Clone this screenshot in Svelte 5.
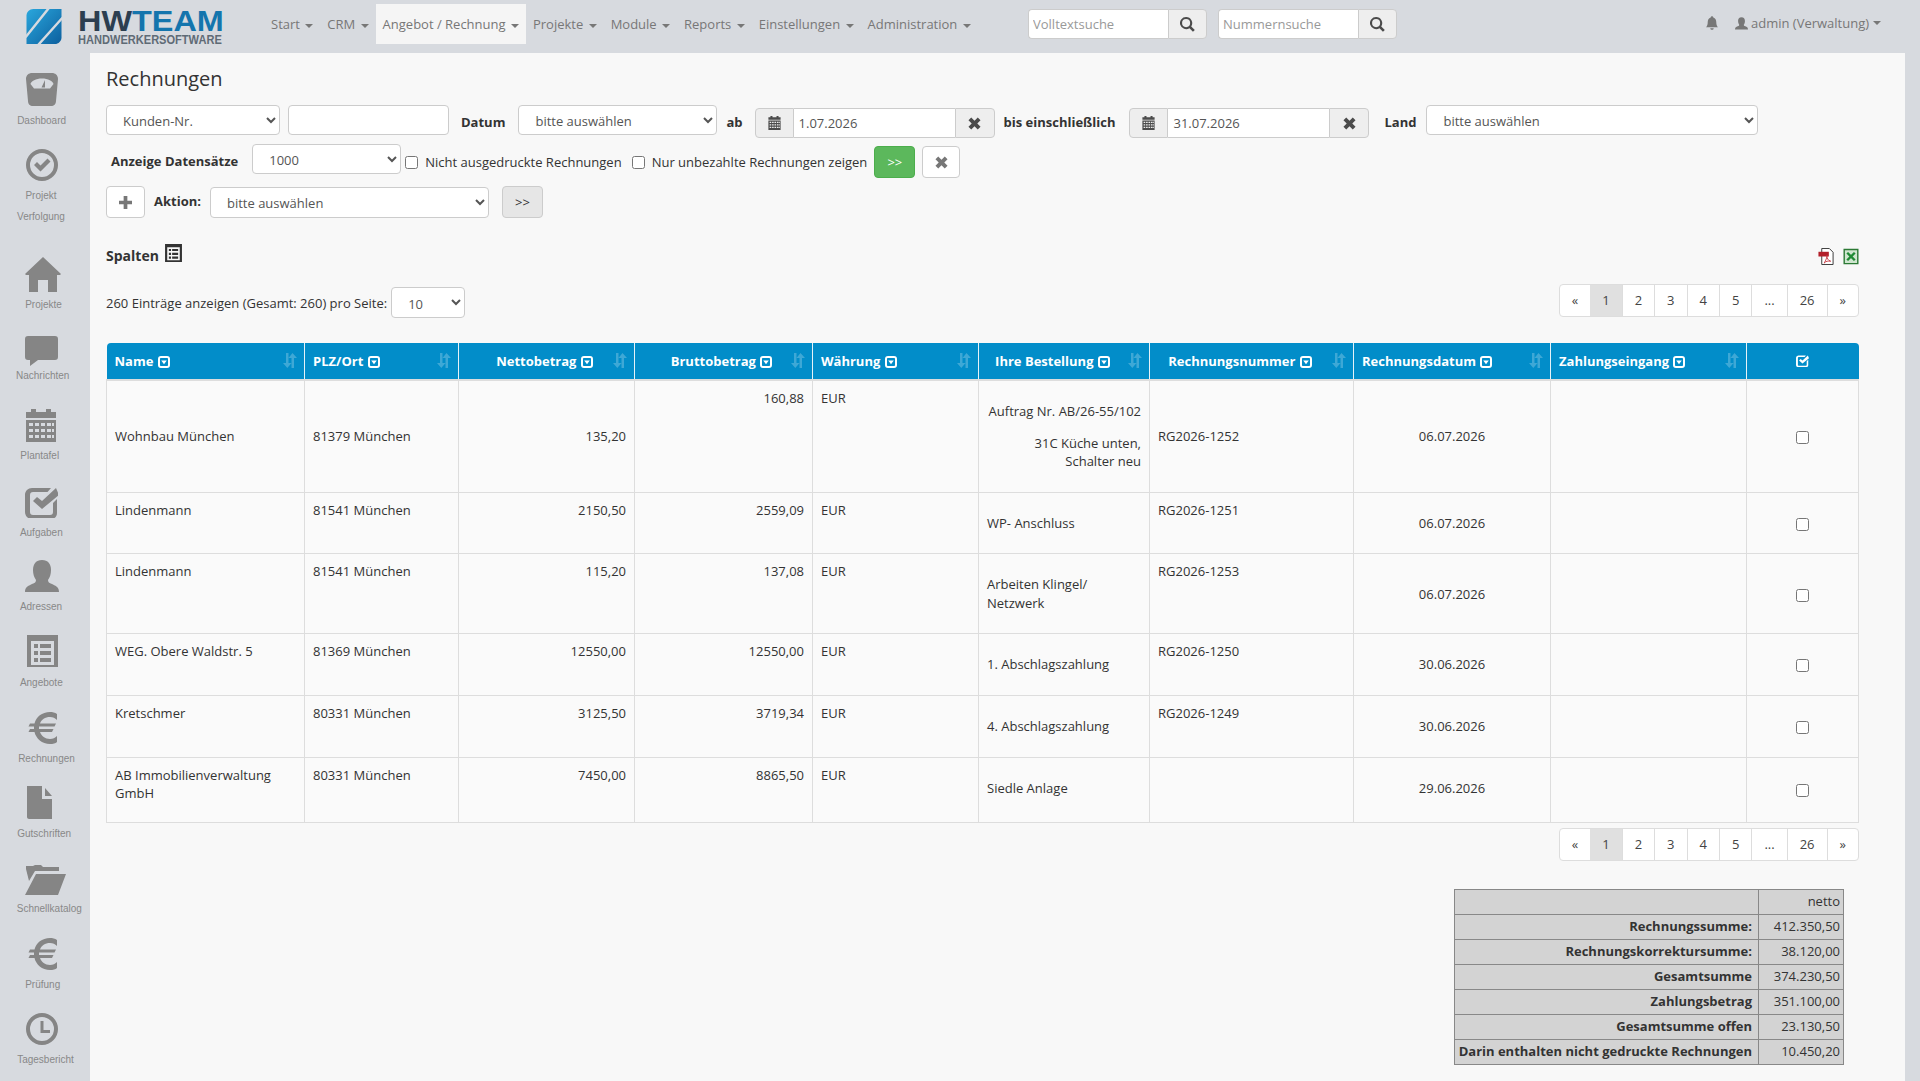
<script>
  const nav = ['Start', 'CRM', 'Angebot / Rechnung', 'Projekte', 'Module', 'Reports', 'Einstellungen', 'Administration'];

  const icons = {
    gauge: 'M6 0h20c3 0 6 2 6 6l-2 22c0 3-2 5-5 5H7c-3 0-5-2-5-5L0 6c0-4 3-6 6-6zM16 5.500C10 5.500 5 8 4.500 11L8 15.500h16L27.500 11C27 8 22 5.500 16 5.500zM19 7l-3.500 7.500h3.500z',
    circleCheck: 'M16 0a16 16 0 1 0 0 32a16 16 0 0 0 0-32zM16 4a12 12 0 1 1 0 24a12 12 0 0 1 0-24zM21.500 9.500l3 3-10 10-6.500-6.500 3-3 3.500 3.500z',
    home: 'M18 0L36 17l-1 1h-3v17H23V23H13v12H4V18H1l-1-1z',
    comment: 'M3 0h27c2 0 3 1 3 3v18c0 2-1 3-3 3H13L5 30V24H3c-2 0-3-1-3-3V3c0-2 1-3 3-3z',
    calendar: 'M1 3h5V0h5v3h10V0h5v3h5v6H1zM1 11h30v23H1zM4 14v3h4v-3zM10 14v3h4v-3zM16 14v3h4v-3zM22 14v3h4v-3zM4 20v3h4v-3zM10 20v3h4v-3zM16 20v3h4v-3zM22 20v3h4v-3zM4 26v3h4v-3zM10 26v3h4v-3zM16 26v3h4v-3zM22 26v3h4v-3zM27 14v3h2v-3zM27 20v3h2v-3zM27 26v3h2v-3z',
    checkSquare: 'M7 1h19l-3.500 4H8c-2 0-3 1-3 3v17c0 2 1 3 3 3h17c2 0 3-1 3-3v-9l4-4v14c0 4-3 6-6 6H7c-4 0-7-3-7-7V8c0-4 3-7 7-7zM31 1l3 7-17 14-9-8 4-4 5 4z',
    user: 'M17 0c6 0 9 4 9 10 0 4-1 7-3 10 0 2 1 3 4 4 4 2 7 3 7 8H0c0-5 3-6 7-8 3-1 4-2 4-4-2-3-3-6-3-10 0-6 3-10 9-10z',
    list: 'M0 0h31v33H0zM4 6v24h23V6zM7 9h4v4H7zM13 9h11v4H13zM7 16h4v4H7zM13 16h11v4H13zM7 23h4v4H7zM13 23h11v4H13z',
    euro: 'M29 3C27 1.500 24.500 1 22 1 14 1 8 6 6.500 12.500H2l-1.500 3H6v2.500H2l-1.500 3h6C8 27.500 14 33 22 33c3 0 5.500-.5 7-2v-6c-2 2-4 3-7 3-5 0-8.500-3-10-7h12l1.500-3H11V15.500h15.500L28 12.500H12C13.500 8.500 17 6 22 6c3 0 5 1 7 3z',
    file: 'M0 0h15v13h10v20H2c-1 0-2-1-2-2zM18 2l7 8h-7z',
    folder: 'M1 4V1h7l2-1h6l2 2h16v4H10L4 16 1 4zM11 9h30L33 30H0z',
    clock: 'M16 0a16 16 0 1 0 0 32a16 16 0 0 0 0-32zM16 4a12 12 0 1 1 0 24a12 12 0 0 1 0-24zM14.500 8h3v9H24v3H14.500z'
  };

  // step = distance to the next icon, drop = icon top to first label line, dx = label off the column middle
  const sidebar = [
    { icon: 'gauge', w: 32, h: 33, x: 26, step: 76, drop: 37, labels: ['Dashboard'], dx: 0.6 },
    { icon: 'circleCheck', w: 32, h: 32, x: 26, step: 108, drop: 36, labels: ['Projekt', 'Verfolgung'], dx: 0 },
    { icon: 'home', w: 36, h: 35, x: 25, step: 79, drop: 37, labels: ['Projekte'], dx: 2.5 },
    { icon: 'comment', w: 33, h: 30, x: 25, step: 73, drop: 29, labels: ['Nachrichten'], dx: 1.7 },
    { icon: 'calendar', w: 31, h: 33, x: 25, step: 78, drop: 36, labels: ['Plantafel'], dx: -1.3 },
    { icon: 'checkSquare', w: 33, h: 31, x: 25, step: 73, drop: 35, labels: ['Aufgaben'], dx: 0.3 },
    { icon: 'user', w: 34, h: 33, x: 25, step: 75, drop: 36, labels: ['Adressen'], dx: 0 },
    { icon: 'list', w: 31, h: 32, x: 27, step: 76, drop: 37, labels: ['Angebote'], dx: 0.3 },
    { icon: 'euro', w: 29, h: 33, x: 28, step: 75, drop: 36.500, labels: ['Rechnungen'], dx: 5.500 },
    { icon: 'file', w: 25, h: 33, x: 27, step: 79, drop: 37, labels: ['Gutschriften'], dx: 3.200 },
    { icon: 'folder', w: 41, h: 30, x: 25, step: 72, drop: 33, labels: ['Schnellkatalog'], dx: 8.300 },
    { icon: 'euro', w: 29, h: 33, x: 28, step: 76, drop: 37, labels: ['Prüfung'], dx: 1.700 },
    { icon: 'clock', w: 32, h: 33, x: 26, step: 60, drop: 36, labels: ['Tagesbericht'], dx: 4.500 }
  ];

  const columns = [
    { label: 'Name', width: 198 },
    { label: 'PLZ/Ort', width: 154 },
    { label: 'Nettobetrag', width: 176, cls: 'center' },
    { label: 'Bruttobetrag', width: 178, cls: 'center' },
    { label: 'Währung', width: 166 },
    { label: 'Ihre Bestellung', width: 171, cls: 'center wide' },
    { label: 'Rechnungsnummer', width: 204, cls: 'center wide' },
    { label: 'Rechnungsdatum', width: 197 },
    { label: 'Zahlungseingang', width: 196 }
  ];

  const rows = [
    { name: 'Wohnbau München', place: '81379 München', net: '135,20', gross: '160,88', order: ['Auftrag Nr. AB/26-55/102', '31C Küche unten, Schalter neu'], right: true, no: 'RG2026-1252', date: '06.07.2026', mid: true },
    { name: 'Lindenmann', place: '81541 München', net: '2150,50', gross: '2559,09', order: ['WP- Anschluss'], no: 'RG2026-1251', date: '06.07.2026' },
    { name: 'Lindenmann', place: '81541 München', net: '115,20', gross: '137,08', order: ['Arbeiten Klingel/ Netzwerk'], no: 'RG2026-1253', date: '06.07.2026' },
    { name: 'WEG. Obere Waldstr. 5', place: '81369 München', net: '12550,00', gross: '12550,00', order: ['1. Abschlagszahlung'], no: 'RG2026-1250', date: '30.06.2026' },
    { name: 'Kretschmer', place: '80331 München', net: '3125,50', gross: '3719,34', order: ['4. Abschlagszahlung'], no: 'RG2026-1249', date: '30.06.2026' },
    { name: 'AB Immobilienverwaltung GmbH', place: '80331 München', net: '7450,00', gross: '8865,50', order: ['Siedle Anlage'], no: '', date: '29.06.2026' }
  ];

  const pages = ['«', '1', '2', '3', '4', '5', '...', '26', '»'];

  const totals = [
    ['', 'netto'],
    ['Rechnungssumme:', '412.350,50'],
    ['Rechnungskorrektursumme:', '38.120,00'],
    ['Gesamtsumme', '374.230,50'],
    ['Zahlungsbetrag', '351.100,00'],
    ['Gesamtsumme offen', '23.130,50'],
    ['Darin enthalten nicht gedruckte Rechnungen', '10.450,20']
  ];
</script>

{#snippet search()}
  <svg class="glyph" viewBox="0 0 16 16" width="15" height="15"><path d="M6.500 0a6.500 6.500 0 1 0 3.600 11.900l3.700 3.900 2-2-3.800-3.800A6.500 6.500 0 0 0 6.500 0zm0 2.200a4.300 4.300 0 1 1 0 8.600 4.300 4.300 0 0 1 0-8.600z" /></svg>
{/snippet}

{#snippet cross()}
  <svg class="glyph" viewBox="0 0 14 14" width="13" height="13"><path d="M3.500.5L7 4l3.500-3.500 3 3L10 7l3.500 3.500-3 3L7 10l-3.500 3.500-3-3L4 7 .5 3.500z" /></svg>
{/snippet}

{#snippet cal()}
  <svg class="glyph" viewBox="0 0 32 34" width="13" height="14"><path fill-rule="evenodd" d={icons.calendar} /></svg>
{/snippet}

{#snippet pagination()}
  <ul class="pagination">
    {#each pages as p}
      <li class:active={p === '1'}>{p}</li>
    {/each}
  </ul>
{/snippet}

<div class="page">
  <header class="topbar">
    <div class="logo">
      <svg viewBox="0 0 36 36" width="36" height="35">
        <defs>
          <linearGradient id="lg" x1="0" y1="0" x2="1" y2="1">
            <stop offset="0" stop-color="#2aa7dd" />
            <stop offset="1" stop-color="#0c5f9e" />
          </linearGradient>
        </defs>
        <path fill="url(#lg)" d="M7 0h29v29c0 4-3 7-7 7H0V7c0-4 3-7 7-7z" />
        <path fill="none" stroke="#d7dadf" stroke-width="2.500" d="M-1 29L23-1M12 37L37 9" />
      </svg>
      <div class="logo-text">
        <div class="brand"><span>HW</span>TEAM</div>
        <div class="sub">HANDWERKERSOFTWARE</div>
      </div>
    </div>

    <nav>
      {#each nav as item}
        <span class="nav-item" class:active={item === 'Angebot / Rechnung'}>{item} <i class="caret"></i></span>
      {/each}
    </nav>

    <div class="search-group first">
      <input type="text" placeholder="Volltextsuche" />
      <span class="search-btn">{@render search()}</span>
    </div>
    <div class="search-group">
      <input type="text" placeholder="Nummernsuche" />
      <span class="search-btn">{@render search()}</span>
    </div>

    <div class="account">
      <svg class="bell" viewBox="0 0 14 16" width="12" height="14"><path d="M7 0c1 0 1.500.7 1.500 1.500C11 2.200 12 4.500 12 7c0 3 .8 4.500 2 6H0c1.200-1.500 2-3 2-6 0-2.500 1-4.800 3.500-5.500C5.500.7 6 0 7 0zM5 14h4c0 1-1 2-2 2s-2-1-2-2z" /></svg>
      <span class="user">
        <svg viewBox="0 0 34 33" width="13" height="13"><path d={icons.user} /></svg>
        admin (Verwaltung) <i class="caret"></i>
      </span>
    </div>
  </header>

  <div class="body">
    <aside>
      {#each sidebar as item}
        <div class="side-item" style="height: {item.step}px">
          <div class="side-icon" style="height: {item.drop}px">
            <svg viewBox="0 0 {item.w} {item.h}" width={item.w} height={item.h} style="margin-left: {item.x}px">
              <path fill-rule="evenodd" d={icons[item.icon]} />
            </svg>
          </div>
          {#each item.labels as label}
            <div class="side-label" style="margin-left: {item.dx}px">{label}</div>
          {/each}
        </div>
      {/each}
    </aside>

    <main>
      <h1>Rechnungen</h1>

      <div class="filter-row one">
        <select class="kunden"><option>Kunden-Nr.</option></select>
        <input class="kunden-input" type="text" />
        <b class="lbl datum">Datum</b>
        <select class="datum-select"><option>bitte auswählen</option></select>
        <b class="lbl ab">ab</b>
        <div class="date-group">
          <span class="addon left">{@render cal()}</span>
          <input type="text" value="1.07.2026" />
          <span class="addon right">{@render cross()}</span>
        </div>
        <b class="lbl bis">bis einschließlich</b>
        <div class="date-group">
          <span class="addon left">{@render cal()}</span>
          <input type="text" value="31.07.2026" />
          <span class="addon right">{@render cross()}</span>
        </div>
        <b class="lbl land">Land</b>
        <select class="land-select"><option>bitte auswählen</option></select>
      </div>

      <div class="filter-row two">
        <b class="lbl anzeige">Anzeige Datensätze</b>
        <select class="count"><option>1000</option></select>
        <label class="check first"><input type="checkbox" /> Nicht ausgedruckte Rechnungen</label>
        <label class="check"><input type="checkbox" /> Nur unbezahlte Rechnungen zeigen</label>
        <button class="btn green">&gt;&gt;</button>
        <button class="btn white">{@render cross()}</button>
      </div>

      <div class="filter-row three">
        <button class="btn white plus">
          <svg class="glyph" viewBox="0 0 14 14" width="13" height="13"><path d="M5 0h4v5h5v4H9v5H5V9H0V5h5z" /></svg>
        </button>
        <b class="lbl aktion">Aktion:</b>
        <select class="aktion-select"><option>bitte auswählen</option></select>
        <button class="btn grey">&gt;&gt;</button>
      </div>

      <div class="spalten-row">
        <b>Spalten</b>
        <svg class="list-icon" viewBox="0 0 31 33" width="17" height="18"><path fill-rule="evenodd" d={icons.list} /></svg>
        <div class="exports">
          <svg viewBox="0 0 16 18" width="16" height="17">
            <path fill="#fff" stroke="#333" d="M3.500.5h8l4 4v13h-12z" />
            <path fill="#b3202a" d="M0 4h11v5H0z" />
            <path fill="none" stroke="#c9434b" d="M6 16c2-3 3-6 3-8 0 3 1 5 4 6-3-.5-5 0-7 2z" />
          </svg>
          <svg viewBox="0 0 16 18" width="16" height="17">
            <path fill="#cfe6cf" stroke="#2c7a35" stroke-width="1.500" d="M.8 1.500h14.400v15H.8z" />
            <path fill="none" stroke="#1f8a34" stroke-width="2.500" d="M4 5l8 8M12 5l-8 8" />
          </svg>
        </div>
      </div>

      <div class="entries-row">
        <span class="entries-text">260 Einträge anzeigen (Gesamt: 260) pro Seite:</span>
        <select class="per-page"><option>10</option></select>
        {@render pagination()}
      </div>

      <table class="list">
        <colgroup>
          {#each columns as col}
            <col style="width: {col.width}px" />
          {/each}
          <col />
        </colgroup>
        <thead>
          <tr>
            {#each columns as col}
              <th class={col.cls}>
                {col.label}
                <svg class="filter" viewBox="0 0 12 12" width="12" height="12">
                  <path fill="#fff" fill-rule="evenodd" d="M3 0h6c2 0 3 1 3 3v6c0 2-1 3-3 3H3c-2 0-3-1-3-3V3c0-2 1-3 3-3zM3 2C2.400 2 2 2.400 2 3v6c0 .6.4 1 1 1h6c.6 0 1-.4 1-1V3c0-.6-.4-1-1-1zM3.200 4.500h5.600L6 8.200z" />
                </svg>
                <svg class="sort" viewBox="0 0 14 15" width="14" height="15">
                  <path d="M3 0h2.500v10H8.500L4.300 15 0 10h3zM9.500 0L14 5h-3v10H8.500V5H5.500z" />
                </svg>
              </th>
            {/each}
            <th class="center check-head">
              <svg viewBox="0 0 34 31" width="13" height="12"><path fill="#fff" fill-rule="evenodd" d={icons.checkSquare} /></svg>
            </th>
          </tr>
        </thead>
        <tbody>
          {#each rows as row}
            <tr>
              <td class:mid={row.mid}>{row.name}</td>
              <td class:mid={row.mid}>{row.place}</td>
              <td class="num" class:mid={row.mid}>{row.net}</td>
              <td class="num">{row.gross}</td>
              <td>EUR</td>
              <td class="order mid" class:num={row.right}>
                {#each row.order as line}
                  <p>{line}</p>
                {/each}
              </td>
              <td class:mid={row.mid}>{row.no}</td>
              <td class="mid center date">{row.date}</td>
              <td></td>
              <td class="mid center"><input type="checkbox" /></td>
            </tr>
          {/each}
        </tbody>
      </table>

      <div class="bottom-pages">
        {@render pagination()}
      </div>

      <table class="totals">
        <tbody>
          {#each totals as [label, value]}
            <tr>
              <th>{label}</th>
              <td>{value}</td>
            </tr>
          {/each}
        </tbody>
      </table>
    </main>
  </div>
</div>

<style>
  :global(body) {
    margin: 0;
    background: #d7dadf;
    font-family: "Open Sans", sans-serif;
    font-size: 13px;
    line-height: 1.42857;
    color: #333;
    overflow: hidden;
  }

  .page {
    height: 1081px;
    display: flex;
    flex-direction: column;
    overflow: hidden;
  }

  svg {
    display: block;
    fill: #858585;
  }

  select,
  input[type="text"] {
    box-sizing: border-box;
    height: 30px;
    border: 1px solid #ccc;
    border-radius: 4px;
    background: #fff;
    color: #555;
    font-family: inherit;
    font-size: 13px;
    padding: 0 12px;
  }

  select {
    padding-top: 2px;
  }

  input::placeholder {
    color: #999;
  }

  .glyph {
    fill: #4b4b4b;
  }

  /* top bar */
  .topbar {
    height: 53px;
    flex: none;
    display: flex;
    align-items: flex-start;
    background: #d7dadf;
  }

  .logo {
    width: 272px;
    flex: none;
    display: flex;
    padding: 9px 0 0 26px;
    box-sizing: border-box;
  }

  .logo-text {
    margin-left: 16px;
    font-family: "Liberation Sans", Arial, sans-serif;
    font-weight: bold;
    white-space: nowrap;
  }

  .brand {
    font-size: 30px;
    line-height: 23px;
    color: #1475ad;
    transform: scaleX(1.08);
    transform-origin: left;
  }

  .brand span {
    color: #2c3e50;
  }

  .sub {
    font-size: 12.500px;
    line-height: 17px;
    color: #5f6b76;
    transform: scaleX(0.885);
    transform-origin: left;
  }

  nav {
    display: flex;
    width: 764px;
    flex: none;
    margin-left: -8px;
    padding-top: 4px;
  }

  .nav-item {
    padding: 0 7px;
    height: 40px;
    line-height: 40px;
    color: #777;
    white-space: nowrap;
  }

  .nav-item.active {
    background: #f5f5f5;
  }

  .caret {
    display: inline-block;
    width: 0;
    height: 0;
    margin-left: 2px;
    vertical-align: middle;
    border-top: 4px solid #777;
    border-left: 4px solid transparent;
    border-right: 4px solid transparent;
  }

  .search-group {
    display: flex;
    margin-top: 9px;
    margin-left: 11px;
    width: 179px;
    flex: none;
  }

  .search-group.first {
    margin-left: 0;
  }

  .search-group input {
    flex: 1;
    min-width: 0;
    padding: 0 4px;
    border-radius: 4px 0 0 4px;
    border-right: 0;
  }

  .search-btn {
    width: 39px;
    height: 30px;
    box-sizing: border-box;
    display: flex;
    align-items: center;
    justify-content: center;
    background: #eee;
    border: 1px solid #ccc;
    border-radius: 0 4px 4px 0;
  }

  .account {
    flex: 1;
    display: flex;
    align-items: center;
    height: 46px;
    padding-left: 309px;
    color: #777;
  }

  .bell {
    fill: #777;
  }

  .user {
    display: flex;
    align-items: center;
    gap: 3px;
    margin-left: 17px;
    white-space: nowrap;
  }

  .user svg {
    fill: #777;
  }

  .user .caret {
    margin-left: 1px;
  }

  /* sidebar */
  .body {
    flex: 1;
    display: flex;
    min-height: 0;
  }

  aside {
    width: 90px;
    flex: none;
    padding-top: 20px;
    font-family: "Liberation Sans", Arial, sans-serif;
  }

  .side-label {
    width: 82px;
    text-align: center;
    font-size: 10px;
    line-height: 21px;
    color: #888;
    white-space: nowrap;
  }

  /* main panel */
  main {
    width: 1815px;
    flex: none;
    box-sizing: border-box;
    background: #f8f8f8;
    padding: 0 46px 0 16px;
  }

  h1 {
    font-size: 20px;
    font-weight: 400;
    line-height: 26px;
    margin: 13px 0 0;
    color: #333;
  }

  .filter-row {
    display: flex;
    align-items: flex-start;
  }

  .lbl {
    font-weight: 700;
    white-space: nowrap;
    color: #333;
  }

  .one {
    margin-top: 13px;
    height: 39px;
  }

  .kunden { width: 174px; }
  .kunden-input { width: 161px; margin-left: 8px; }
  .datum { margin: 8px 13px 0 12px; }
  .datum-select { width: 199px; }
  .ab { margin: 8px 12px 0 9px; }
  .bis { margin: 8px 14px 0 9px; }
  .land { margin: 8px 10px 0 15px; }
  .land-select { width: 332px; }

  .date-group {
    display: flex;
    width: 240px;
    margin-top: 3px;
  }

  .date-group input {
    flex: 1;
    min-width: 0;
    border-radius: 0;
    border-left: 0;
    border-right: 0;
    padding: 0 5px;
  }

  .addon {
    width: 39px;
    height: 30px;
    box-sizing: border-box;
    flex: none;
    display: flex;
    align-items: center;
    justify-content: center;
    background: #eee;
    border: 1px solid #ccc;
  }

  .addon.left { border-radius: 4px 0 0 4px; }
  .addon.right { width: 40px; border-radius: 0 4px 4px 0; }

  .two {
    height: 42px;
  }

  .anzeige { margin: 8px 14px 0 5px; }
  .count { width: 149px; }

  .check {
    display: flex;
    align-items: center;
    gap: 7px;
    margin: 9px 0 0 10px;
    white-space: nowrap;
    color: #333;
  }

  .check.first {
    margin-left: 4px;
  }

  .check input {
    margin: 0;
    width: 13px;
    height: 13px;
  }

  .btn {
    box-sizing: border-box;
    height: 32px;
    border: 1px solid #ccc;
    border-radius: 4px;
    display: flex;
    align-items: center;
    justify-content: center;
    font-family: inherit;
    font-size: 13px;
    padding: 0;
  }

  .btn .glyph {
    fill: #777;
  }

  .green {
    width: 41px;
    margin: 2px 0 0 7px;
    background: #5cb85c;
    border-color: #4cae4c;
    color: #fff;
  }

  .white {
    width: 38px;
    margin: 2px 0 0 7px;
    background: #fff;
  }

  .plus {
    width: 39px;
    margin: 0;
  }

  .three {
    height: 33px;
  }

  .aktion { margin: 6px 9px 0; }
  .aktion-select { width: 279px; height: 31px; margin-top: 1px; padding-top: 0; }

  .grey {
    width: 41px;
    margin-left: 13px;
    background: #e6e6e6;
    color: #333;
  }

  .spalten-row {
    display: flex;
    align-items: center;
    height: 22px;
    margin-top: 26px;
    width: 1753px;
  }

  .spalten-row b {
    font-size: 14px;
  }

  .list-icon {
    margin: -6px 0 0 6px;
    fill: #333;
  }

  .exports {
    margin-left: auto;
    display: flex;
    gap: 9px;
  }

  .entries-row {
    display: flex;
    align-items: flex-start;
    width: 1753px;
    height: 34px;
    margin-top: 17px;
  }

  .entries-text {
    margin-top: 10px;
  }

  .per-page {
    width: 74px;
    margin: 3px 0 0 4px;
    height: 31px;
  }

  .pagination {
    list-style: none;
    display: flex;
    margin: 0 0 0 auto;
    padding: 0;
    background: #fff;
    border: 1px solid #ddd;
    border-radius: 4px;
    height: 31px;
    overflow: hidden;
  }

  .pagination li {
    padding: 0 12px;
    line-height: 31px;
    text-align: center;
    border-left: 1px solid #ddd;
    color: #444;
  }

  .pagination li:first-child {
    border-left: 0;
  }

  .pagination li.active {
    background: #e0e0e0;
    border-left: 0;
  }

  /* list */
  .list {
    width: 1753px;
    table-layout: fixed;
    border-collapse: collapse;
    margin-top: 25px;
  }

  .list th {
    position: relative;
    height: 37px;
    box-sizing: border-box;
    padding: 0 8px;
    background: #028dc9;
    color: #fff;
    font-weight: 700;
    text-align: left;
    white-space: nowrap;
    border-right: 1px solid #e6f2f8;
    border-bottom: 2px solid #ddd;
  }

  .list th:first-child {
    border-top-left-radius: 4px;
  }

  .list th:last-child {
    border-right: 0;
    border-top-right-radius: 4px;
  }

  .list th.center {
    text-align: center;
    padding-right: 12px;
  }

  .list th.wide {
    padding-right: 31px;
  }

  .list th.check-head {
    padding-right: 8px;
  }

  .filter {
    display: inline-block;
    vertical-align: -2px;
    margin-left: 1px;
  }

  .sort {
    position: absolute;
    right: 7px;
    top: 10px;
    fill: rgba(255, 255, 255, 0.24);
  }

  .check-head svg {
    margin: 0 auto;
  }

  .list td {
    box-sizing: border-box;
    padding: 8px;
    vertical-align: top;
    border: 1px solid #ddd;
    background: #fafafa;
  }

  .list td.mid {
    vertical-align: middle;
  }

  .list td.num {
    text-align: right;
  }

  .list td.center {
    text-align: center;
  }

  .list td input {
    margin: 0;
    vertical-align: middle;
  }

  .order p {
    margin: 13px 0;
  }

  .order p + p {
    margin-top: 12px;
  }

  .list tbody tr:last-child td {
    height: 65px;
  }

  .list tbody tr:last-child td.order,
  .list tbody tr:last-child td.date {
    padding-bottom: 11px;
  }

  .bottom-pages {
    display: flex;
    width: 1753px;
    margin-top: 5px;
  }

  /* summary */
  .totals {
    width: 390px;
    margin: 28px 0 0 1348px;
    border-collapse: collapse;
    background: #d3d3d3;
  }

  .totals th,
  .totals td {
    box-sizing: border-box;
    height: 25px;
    padding: 0 3px;
    border: 1px solid #888;
    text-align: right;
    white-space: nowrap;
  }

  .totals th {
    font-weight: 700;
    padding-right: 6px;
  }

  .totals td {
    width: 85px;
  }
</style>
